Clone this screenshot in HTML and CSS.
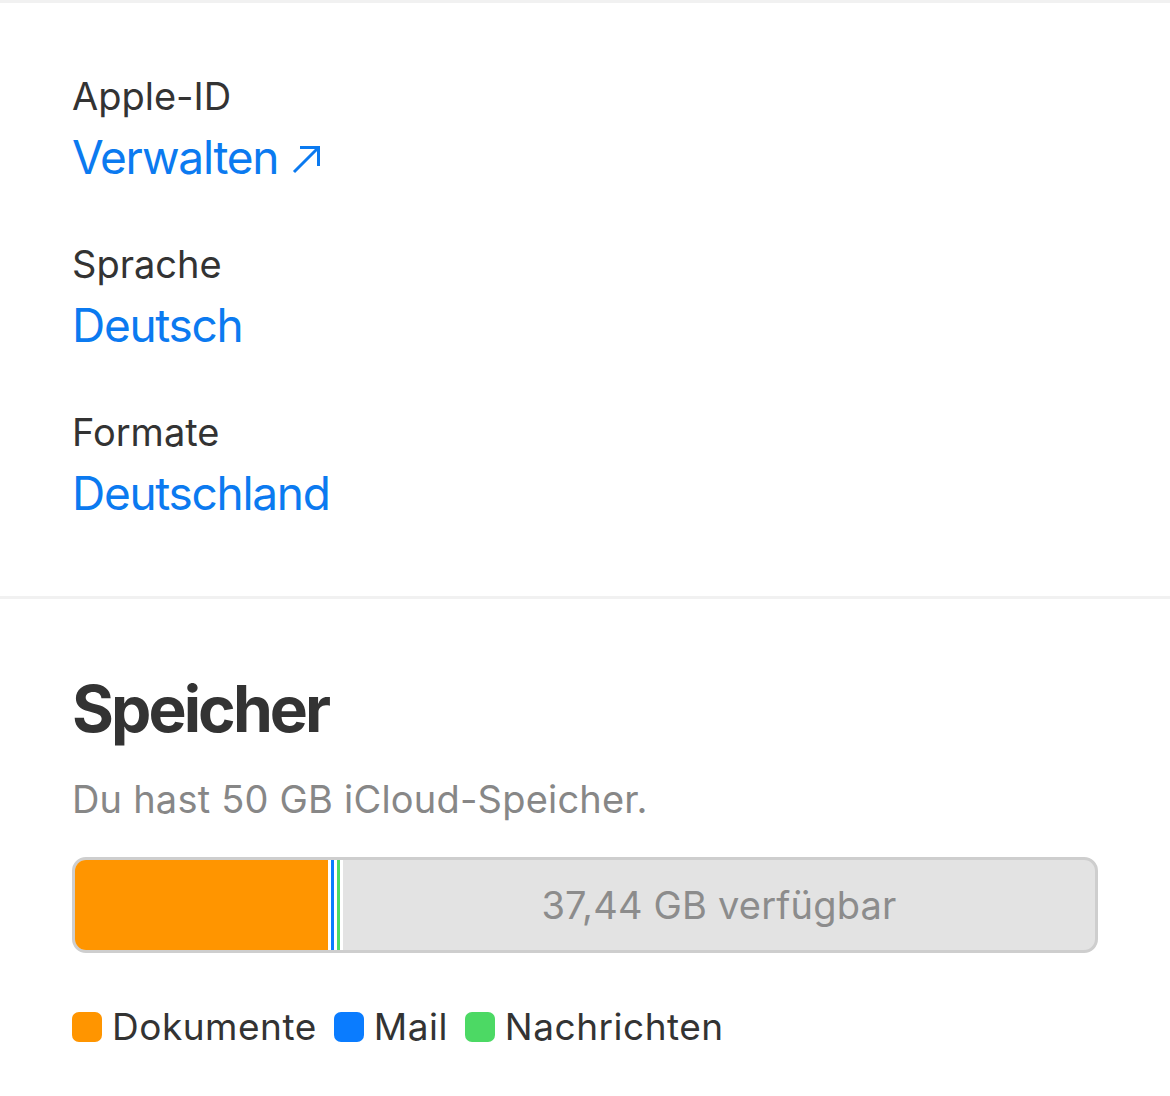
FILE: index.html
```html
<!DOCTYPE html>
<html lang="de">
<head>
<meta charset="utf-8">
<title>Account</title>
<link rel="stylesheet" href="styles.css">
</head>
<body>
<div class="page">
  <section class="prefs">
    <div class="group">
      <div class="label">Apple-ID</div>
      <a class="value" href="#">Verwalten<svg class="ext" width="30" height="30" viewBox="0 0 30 30" aria-hidden="true"><path d="M2 28 L26.5 3.5 M8 3.5 H26.5 V22" fill="none" stroke="currentColor" stroke-width="3"/></svg></a>
    </div>
    <div class="group">
      <div class="label">Sprache</div>
      <a class="value" href="#">Deutsch</a>
    </div>
    <div class="group">
      <div class="label">Formate</div>
      <a class="value" href="#">Deutschland</a>
    </div>
  </section>
  <section class="storage">
    <h2 class="title">Speicher</h2>
    <p class="subtitle">Du hast 50 GB iCloud-Speicher.</p>
    <div class="bar">
      <div class="seg seg-docs" style="width:253px"></div>
      <div class="seg seg-mail" style="width:3px"></div>
      <div class="seg seg-msg" style="width:3px"></div>
      <div class="free">37,44 GB verfügbar</div>
    </div>
    <ul class="legend">
      <li class="item"><span class="swatch swatch-docs"></span>Dokumente</li>
      <li class="item"><span class="swatch swatch-mail"></span>Mail</li>
      <li class="item"><span class="swatch swatch-msg"></span>Nachrichten</li>
    </ul>
  </section>
</div>
</body>
</html>
```
FILE: styles.css
```css
html, body {
  margin: 0;
  padding: 0;
  background: #ffffff;
}
body {
  font-family: Inter, "Noto Sans", "Liberation Sans", sans-serif;
  color: #333333;
}
.page {
  border-top: 3px solid #f1f1f1;
}
.prefs {
  padding: 70px 72px 75px;
  display: flex;
  flex-direction: column;
  gap: 56px;
  border-bottom: 3px solid #f1f1f1;
}
.group {
  display: flex;
  flex-direction: column;
  align-items: flex-start;
  gap: 10px;
}
.label {
  font-size: 38px;
  line-height: 46px;
  color: #333333;
}
.value {
  font-size: 46px;
  line-height: 56px;
  letter-spacing: -1.3px;
  color: #0b7af0;
  text-decoration: none;
}
.ext {
  margin-left: 14px;
  vertical-align: baseline;
}
.storage {
  padding: 72px 72px 40px 72px;
}
.title {
  margin: 0;
  font-size: 64px;
  line-height: 76px;
  font-weight: 700;
  letter-spacing: -2.9px;
  color: #333333;
}
.subtitle {
  margin: 30px 0 0;
  font-size: 38px;
  line-height: 44px;
  letter-spacing: 0.2px;
  color: #878787;
}
.bar {
  margin: 36px 0 0 0;
  height: 90px;
  border: 3px solid #cecece;
  border-radius: 14px;
  background: #e3e3e3;
  display: flex;
  overflow: hidden;
}
.seg {
  flex: none;
  height: 100%;
}
.seg-docs {
  background: #ff9500;
}
.seg-mail {
  background: #0a7cff;
  border-left: 3px solid #ffffff;
}
.seg-msg {
  background: #4cd964;
  border-left: 3px solid #ffffff;
  border-right: 3px solid #ffffff;
}
.free {
  flex: 1;
  display: flex;
  align-items: center;
  justify-content: center;
  font-size: 38px;
  letter-spacing: 0.2px;
  color: #8c8c8c;
}
.legend {
  list-style: none;
  margin: 52px 0 0 0;
  padding: 0;
  display: flex;
  align-items: center;
  gap: 17px;
}
.item {
  display: flex;
  align-items: center;
  gap: 10px;
  font-size: 37px;
  line-height: 44px;
  letter-spacing: 0.5px;
  color: #333333;
}
.swatch {
  width: 30px;
  height: 30px;
  border-radius: 7px;
  flex: none;
}
.swatch-docs { background: #ff9500; }
.swatch-mail { background: #0a7cff; }
.swatch-msg { background: #4cd964; }
```
